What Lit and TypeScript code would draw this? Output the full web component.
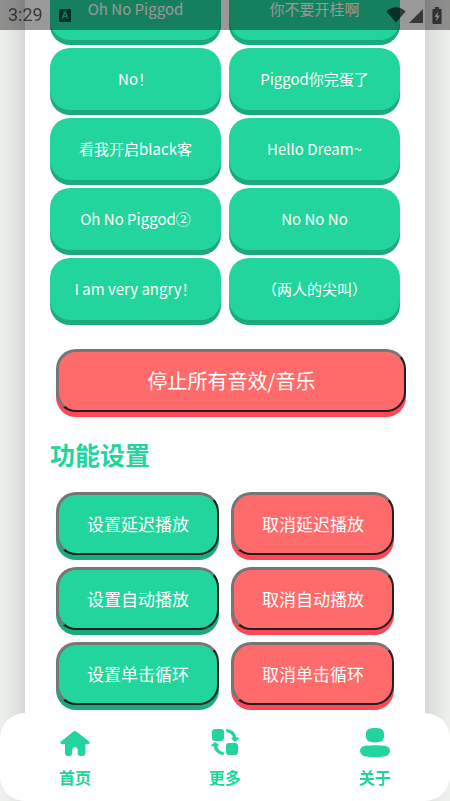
import { LitElement, html, css, svg } from "lit";
import { customElement } from "lit/decorators.js";

const SOUNDS = [
  "Oh No Piggod",
  "你不要开桂啊",
  "No！",
  "Piggod你完蛋了",
  "看我开启black客",
  "Hello Dream~",
  "Oh No Piggod②",
  "No No No",
  "I am very angry！",
  "（两人的尖叫）",
];

const ACTIONS = ["延迟播放", "自动播放", "单击循环"];

const homeIcon = svg`<path d="M13.2 1.8Q15 .2 16.8 1.8L29 11.6Q30.6 13.6 28.4 14.2H25.4V23Q25.4 26 22.4 26H20.6Q17.8 26 17.8 23V19.6Q17.4 17 15 17Q12.6 17 12.2 19.6V23Q12.2 26 9.4 26H8Q5 26 5 23V14.2H1.6Q-.6 13.6 1 11.6Z" />`;

const swapIcon = svg`
  <rect x="2" y="0" width="12" height="12" rx="3" />
  <rect x="16" y="14" width="12" height="12" rx="3" />
  <path d="M16.2 0Q25.4 .8 26.2 8.6H28.6Q29.4 9 28.8 9.8L25.8 12.6Q25 13.1 24.2 12.6L21.6 9.8Q21 9 21.8 8.6H23Q22 4 16.2 3Z" />
  <path d="M13.8 26.2Q4.6 25 3.8 17.2H1.6Q.8 16.8 1.4 16L4.2 13.4Q5 12.8 5.8 13.4L8.6 16Q9.2 16.8 8.4 17.2H7.2Q8.4 22.4 13.8 23.2Z" />`;

const personIcon = svg`
  <path d="M6 5.6Q6.4 1.4 10 .6Q15 -.8 20 .6Q23.6 1.4 24 5.6V9Q23.6 13 20 13.8Q15 15 10 13.8Q6.4 13 6 9Z" />
  <path d="M0 23Q.2 18.6 5 17.8Q15 16.6 25 17.8Q29.8 18.6 30 23Q29.6 27 25 28.2Q15 30 5 28.2Q.4 27 0 23Z" />`;

const TABS = [
  { label: "首页", icon: homeIcon, box: "0 -2 30 30" },
  { label: "更多", icon: swapIcon, box: "0 -1 30 30" },
  { label: "关于", icon: personIcon, box: "0 0 30 30" },
];

@customElement("status-bar")
export class StatusBar extends LitElement {
  static styles = css`
    :host {
      position: fixed;
      inset: 0 0 auto 0;
      z-index: 3;
      display: flex;
      align-items: center;
      height: 30px;
      box-sizing: border-box;
      padding: 0 8px;
      background: rgba(0, 0, 0, 0.4);
      color: rgba(0, 0, 0, 0.64);
      font: 400 18px/32px Roboto, sans-serif;
    }
    svg {
      display: block;
      fill: currentColor;
    }
    .keyboard {
      margin-left: 16px;
    }
    .signals {
      display: flex;
      align-items: center;
      gap: 3px;
      margin-left: auto;
    }
    .battery {
      margin-left: 6px;
    }
  `;

  render() {
    return html`
      <span>3:29</span>
      <svg class="keyboard" width="12" height="13" viewBox="0 0 12 13">
        <path fill-rule="evenodd" d="M1 0H11Q12 0 12 1V12Q12 13 11 13H1Q0 13 0 12V1Q0 0 1 0ZM5 2.5L2.6 9.5H4.2L4.7 8H7.3L7.8 9.5H9.4L7 2.5ZM6 4.2L6.9 6.8H5.1Z" />
      </svg>
      <div class="signals">
        <svg width="20" height="16" viewBox="0 0 20 16">
          <path d="M10 15.5L.4 4.4Q10-3.8 19.6 4.4Z" />
        </svg>
        <svg width="14" height="15" viewBox="0 0 14 15"><path d="M14 1V15H0Z" /></svg>
        <svg class="battery" width="10" height="17" viewBox="0 0 10 17">
          <path fill-rule="evenodd" d="M3 0H7V2H9Q9.6 2 9.6 3V16Q9.6 17 8.6 17H1.4Q.4 17 .4 16V3Q.4 2 1.4 2H3ZM6 4.6L2.4 10H4.8L4 14.4L7.8 8.6H5.4Z" />
        </svg>
      </div>
    `;
  }
}

@customElement("tab-bar")
export class TabBar extends LitElement {
  static styles = css`
    :host {
      position: fixed;
      inset: auto 0 0 0;
      z-index: 2;
      display: grid;
      grid-template-columns: repeat(3, 1fr);
      box-sizing: border-box;
      padding: 15px 0 12px;
      border-radius: 25px;
      background: #fff;
    }
    .tab {
      display: flex;
      flex-direction: column;
      align-items: center;
      gap: 7px;
      color: #22d59c;
      font: 700 16px/24px "Noto Sans CJK SC", sans-serif;
      text-decoration: none;
    }
    svg {
      display: block;
      width: 30px;
      height: 30px;
      fill: currentColor;
    }
  `;

  render() {
    return TABS.map(
      (t) => html`<a class="tab" href="#">
        <svg viewBox=${t.box} aria-hidden="true">${t.icon}</svg>
        <span>${t.label}</span>
      </a>`
    );
  }
}

@customElement("app-root")
export class AppRoot extends LitElement {
  static styles = css`
    :host {
      display: block;
      height: 100vh;
      overflow: hidden;
      background: #f0f2ef;
      font-family: "Noto Sans CJK SC", sans-serif;
    }
    .card {
      min-height: 100vh;
      box-sizing: border-box;
      margin: -22px 25px 0;
      padding: 0 25px 100px;
      background: #fff;
      box-shadow: 0 0 30px rgba(0, 0, 0, 0.22);
    }
    .sounds {
      display: grid;
      grid-template-columns: 1fr 1fr;
      gap: 8px;
    }
    button {
      display: block;
      box-sizing: border-box;
      width: 100%;
      margin: 0;
      padding: 0 0 2px;
      border-radius: 20px;
      font-family: inherit;
      color: #fff;
    }
    .sound {
      height: 62px;
      border: 0;
      font-size: 15px;
    }
    .green {
      background: #22d59c;
      box-shadow: 0 5px 0 #1ca97c;
    }
    .red {
      background: #ff6b6b;
      box-shadow: 0 5px 0 #ff4757;
    }
    .framed {
      height: 63px;
      border-style: solid;
      border-width: 3px 2px 2px 3px;
      border-color: #767676 #212121 #212121 #767676;
      font-size: 17px;
    }
    .stop {
      margin: 29px -6px 0 6px;
      display: flex;
    }
    .large {
      font-size: 20px;
    }
    h2 {
      margin: 24px 0 0;
      color: #22d59c;
      font-size: 25px;
      line-height: 36px;
    }
    .actions {
      display: grid;
      grid-template-columns: 1fr 1fr;
      gap: 12px;
      margin: 20px 6px 0;
    }
  `;

  render() {
    return html`
      <status-bar></status-bar>
      <main class="card">
        <div class="sounds">
          ${SOUNDS.map((s) => html`<button class="sound green">${s}</button>`)}
        </div>
        <div class="stop">
          <button class="framed large red">停止所有音效/音乐</button>
        </div>
        <h2>功能设置</h2>
        <div class="actions">
          ${ACTIONS.map(
            (a) => html`
              <button class="framed green">设置${a}</button>
              <button class="framed red">取消${a}</button>
            `
          )}
        </div>
      </main>
      <tab-bar></tab-bar>
    `;
  }
}
